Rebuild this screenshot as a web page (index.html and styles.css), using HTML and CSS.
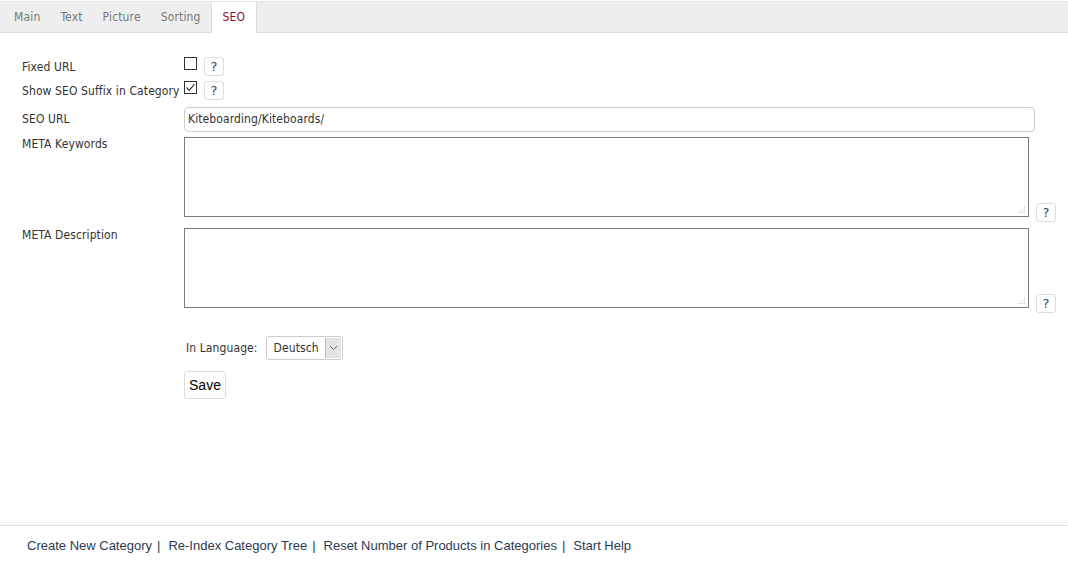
FILE: index.html
```html
<!DOCTYPE html>
<html>
<head>
<meta charset="utf-8">
<link rel="stylesheet" href="styles.css">
</head>
<body>
<div class="page">
  <div class="tabs">
    <a class="tab">Main</a>
    <a class="tab">Text</a>
    <a class="tab">Picture</a>
    <a class="tab">Sorting</a>
    <a class="tab active">SEO</a>
  </div>
  <div class="form">
    <div class="row r-check">
      <label class="lbl">Fixed URL</label>
      <div class="field"><span class="cb"></span><span class="help">?</span></div>
    </div>
    <div class="row r-check2">
      <label class="lbl">Show SEO Suffix in Category</label>
      <div class="field"><span class="cb"><svg width="11" height="11" viewBox="0 0 11 11"><path d="M1.5 5.5 L4.3 8.3 L9.5 2.2" fill="none" stroke="#333" stroke-width="1.2"/></svg></span><span class="help">?</span></div>
    </div>
    <div class="row r-url">
      <label class="lbl">SEO URL</label>
      <div class="field"><div class="input">Kiteboarding/Kiteboards/</div></div>
    </div>
    <div class="row r-area">
      <label class="lbl">META Keywords</label>
      <div class="field area-field"><div class="textarea"><span class="grip"></span></div><span class="help help-b">?</span></div>
    </div>
    <div class="row r-area">
      <label class="lbl">META Description</label>
      <div class="field area-field"><div class="textarea"><span class="grip"></span></div><span class="help help-b">?</span></div>
    </div>
    <div class="row r-lang">
      <div class="field lang"><span class="lang-lbl">In Language:</span><div class="select"><span class="sel-text">Deutsch</span><span class="sel-btn"><svg width="9" height="6" viewBox="0 0 9 6"><path d="M1 1 L4.5 4.5 L8 1" fill="none" stroke="#666" stroke-width="1"/></svg></span></div></div>
    </div>
    <div class="row r-save">
      <div class="field"><button class="save">Save</button></div>
    </div>
  </div>
  <div class="footer">
    <a>Create New Category</a><span class="sep">|</span><a>Re-Index Category Tree</a><span class="sep">|</span><a>Reset Number of Products in Categories</a><span class="sep">|</span><a>Start Help</a>
  </div>
</div>
</body>
</html>
```
FILE: styles.css
```css
* { box-sizing: border-box; }
html, body { margin: 0; padding: 0; background: #fff; }
body { font-family: Tahoma, "DejaVu Sans Condensed", "DejaVu Sans", sans-serif; font-size: 12px; letter-spacing: 0.1px; color: #333; }
.page { width: 1068px; height: 564px; display: flex; flex-direction: column; }
.tabs { margin-top: 1px; height: 32px; background: #eeeeee; border-top: 1px solid #e2e2e2; border-bottom: 1px solid #dddddd; display: flex; padding-left: 4px; }
.tab { display: block; padding: 0 10px; line-height: 31px; color: #777; letter-spacing: 0.15px; }
.tab.active { background: #fff; color: #8b1038; border-left: 1px solid #ddd; border-right: 1px solid #ddd; margin-bottom: -1px; height: 31px; padding: 0 11px; }
.form { padding-top: 24px; flex: 1; }
.row { display: flex; align-items: flex-start; }
.lbl { width: 184px; padding-left: 22px; flex: none; color: #333; white-space: nowrap; }
.field { display: flex; }
.r-check { height: 24px; }
.r-check .lbl, .r-check2 .lbl { padding-top: 3px; }
.r-check2 { height: 24px; }
.cb { width: 13px; height: 13px; border: 1px solid #333; background: #fff; display: inline-flex; align-items: center; justify-content: center; }
.cb svg { display: block; }
.help { width: 20px; height: 19px; border: 1px solid #ddd; border-radius: 3px; background: #fff; margin-left: 7px; font-family: "DejaVu Sans", sans-serif; font-weight: normal; color: #3a4555; font-size: 13px; line-height: 18px; text-align: center; letter-spacing: 0; }
.r-url { height: 30px; margin-top: 2px; }
.r-url .lbl { padding-top: 5px; }
.input { width: 851px; height: 25px; border: 1px solid #ccc; border-radius: 4px; padding: 4px 3px; color: #333; }
.r-area { height: 91px; }
.area-field { align-items: flex-end; }
.textarea { width: 845px; height: 80px; border: 1px solid #7a7a7a; position: relative; }
.grip { position: absolute; right: 3px; bottom: 3px; width: 7px; height: 7px; background:
  radial-gradient(circle, #aaa 0.6px, transparent 0.9px) 0 0 / 2.5px 2.5px; clip-path: polygon(100% 0, 100% 100%, 0 100%); }
.help-b { margin-left: 7px; margin-bottom: -5px; }
.r-lang { margin-top: 10px; height: 42px; }
.lang { padding-left: 186px; align-items: center; height: 37px; }
.lang-lbl { margin-right: 8px; color: #333; }
.select { display: flex; width: 77px; height: 24px; border: 1px solid #ccc; border-radius: 3px; align-items: stretch; }
.sel-text { flex: 1; padding-left: 7px; line-height: 22px; color: #333; }
.sel-btn { width: 16px; border-left: 1px solid #bbb; background: #e4e4e4; display: flex; align-items: center; justify-content: center; margin: 1px; }
.r-save { height: 40px; }
.save { margin-left: 184px; width: 42px; height: 28px; border: 1px solid #ddd; border-radius: 3px; background: #fff; font-family: "Liberation Sans", Arial, sans-serif; font-size: 14px; color: #000; padding: 0; }
.footer { height: 39px; border-top: 1px solid #e3e3e3; box-shadow: 0 -3px 4px rgba(0,0,0,0.04); padding: 12px 0 0 27px; font-family: "Liberation Sans", Arial, sans-serif; font-size: 13px; letter-spacing: 0; color: #2b3a55; }
.footer .sep { margin: 0 8px 0 5px; }
.footer a { color: #2b3a55; }
```
